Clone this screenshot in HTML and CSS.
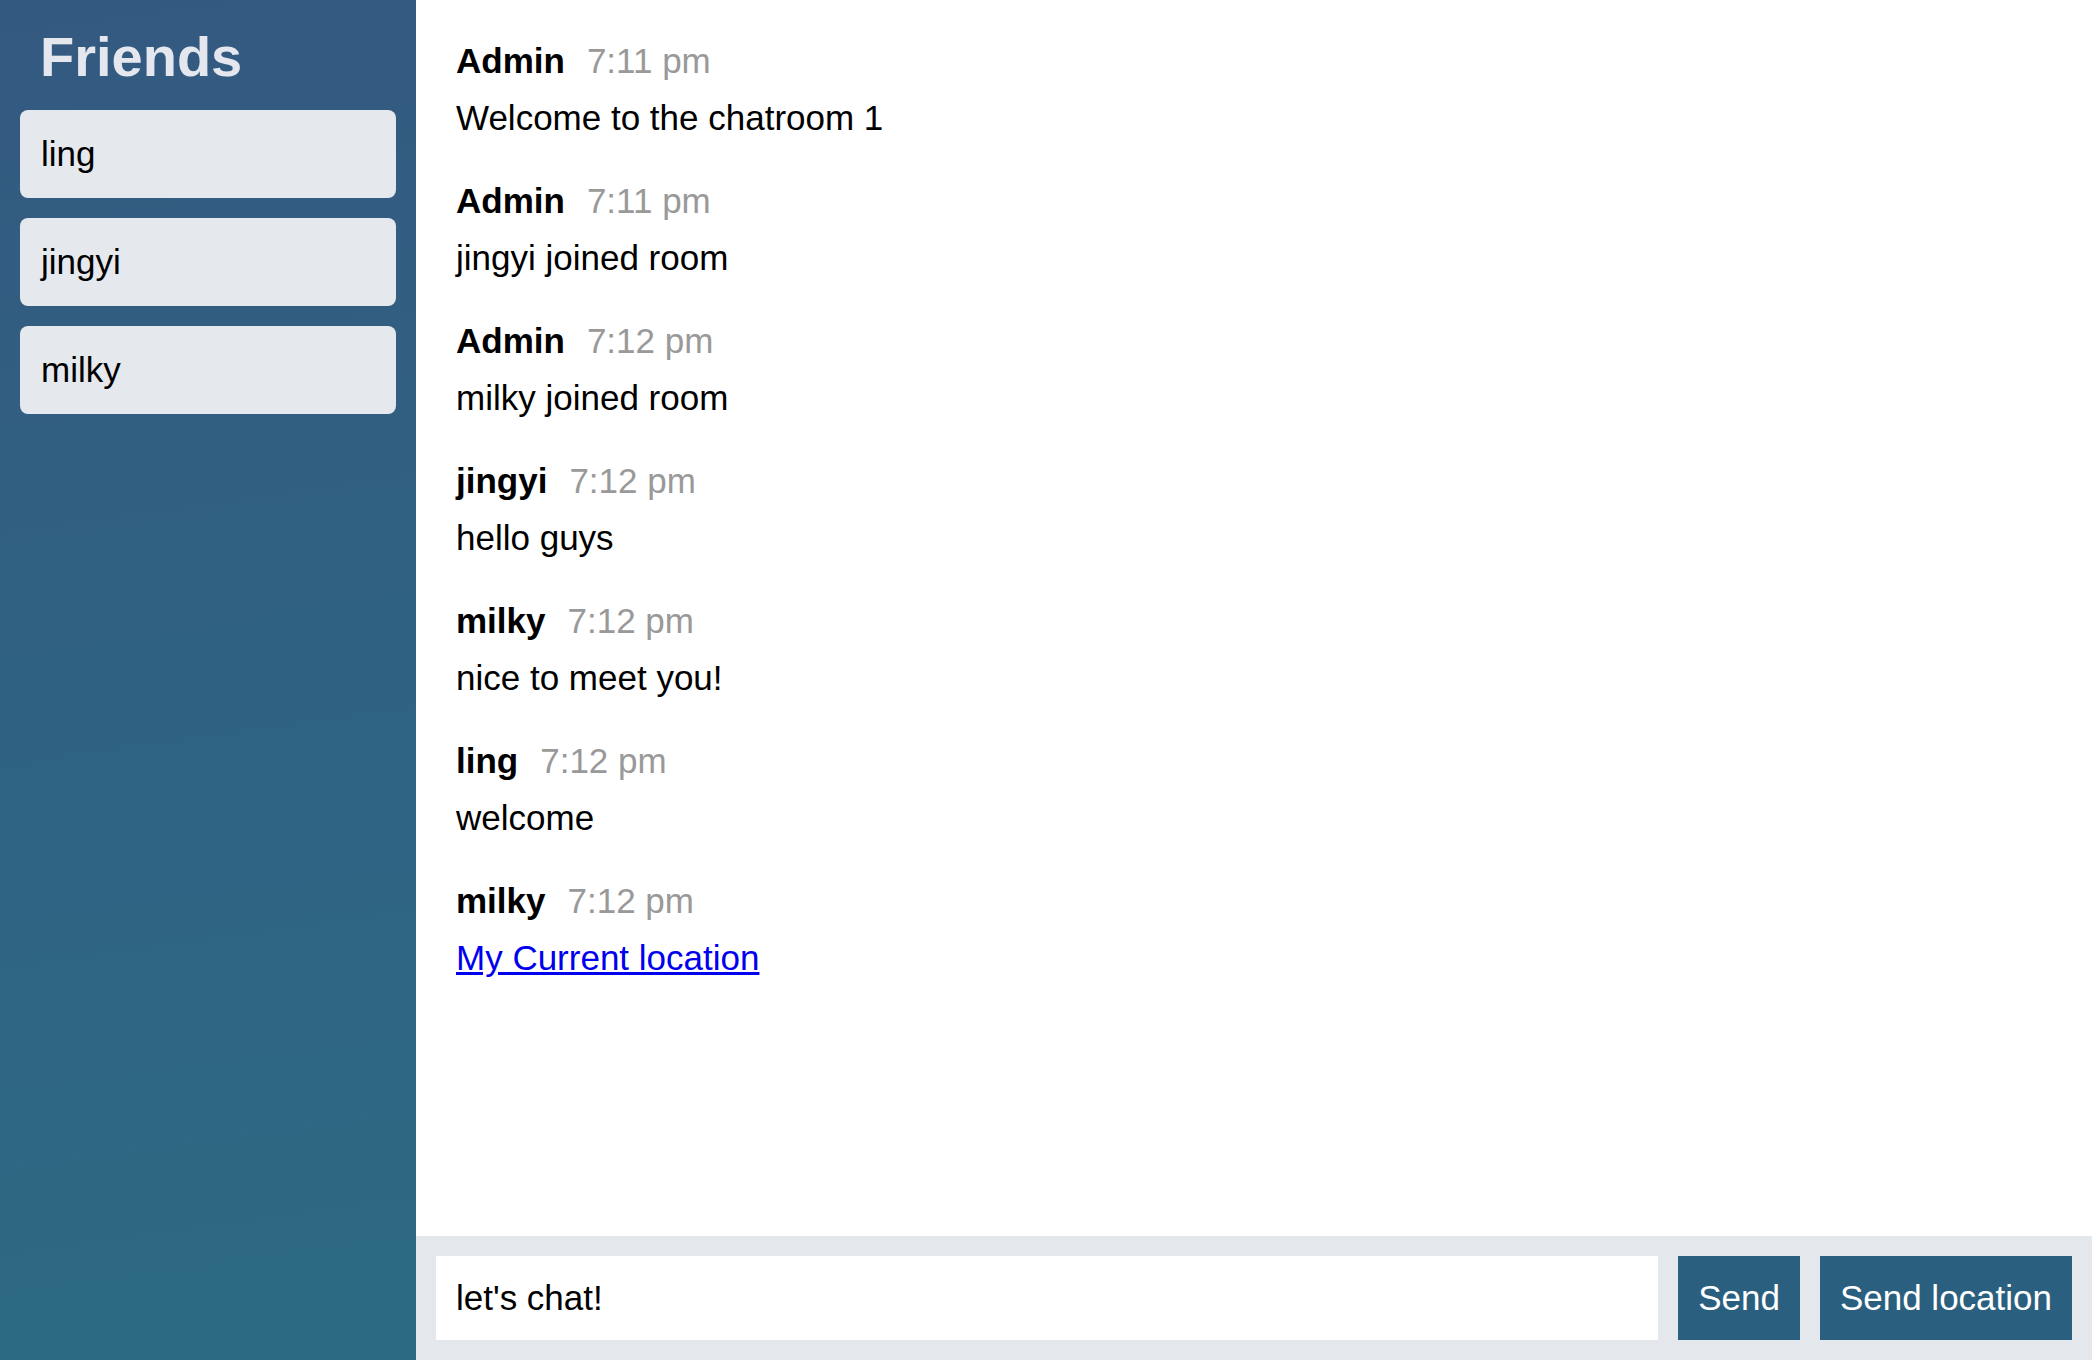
FILE: index.html
```html
<!DOCTYPE html>
<html lang="en">
<head>
<meta charset="utf-8">
<title>Chat</title>
<link rel="stylesheet" href="styles.css">
</head>
<body>
<div class="app">
  <aside class="sidebar">
    <h2 class="sidebar-title">Friends</h2>
    <ul class="friend-list">
      <li class="friend">ling</li>
      <li class="friend">jingyi</li>
      <li class="friend">milky</li>
    </ul>
  </aside>
  <main class="chat">
    <div class="messages">
      <div class="message">
        <p class="message-meta"><span class="message-name">Admin</span><span class="message-time">7:11 pm</span></p>
        <p class="message-body">Welcome to the chatroom 1</p>
      </div>
      <div class="message">
        <p class="message-meta"><span class="message-name">Admin</span><span class="message-time">7:11 pm</span></p>
        <p class="message-body">jingyi joined room</p>
      </div>
      <div class="message">
        <p class="message-meta"><span class="message-name">Admin</span><span class="message-time">7:12 pm</span></p>
        <p class="message-body">milky joined room</p>
      </div>
      <div class="message">
        <p class="message-meta"><span class="message-name">jingyi</span><span class="message-time">7:12 pm</span></p>
        <p class="message-body">hello guys</p>
      </div>
      <div class="message">
        <p class="message-meta"><span class="message-name">milky</span><span class="message-time">7:12 pm</span></p>
        <p class="message-body">nice to meet you!</p>
      </div>
      <div class="message">
        <p class="message-meta"><span class="message-name">ling</span><span class="message-time">7:12 pm</span></p>
        <p class="message-body">welcome</p>
      </div>
      <div class="message">
        <p class="message-meta"><span class="message-name">milky</span><span class="message-time">7:12 pm</span></p>
        <p class="message-body"><a class="message-link" href="#">My Current location</a></p>
      </div>
    </div>
    <div class="compose">
      <form class="compose-form">
        <input class="compose-input" type="text" value="let's chat!">
        <button class="btn" type="button">Send</button>
      </form>
      <button class="btn" type="button">Send location</button>
    </div>
  </main>
</div>
</body>
</html>
```
FILE: styles.css
```css
* {
  box-sizing: border-box;
}

html, body {
  margin: 0;
  padding: 0;
  height: 100%;
}

body {
  font-family: "Liberation Sans", Arial, Helvetica, sans-serif;
  font-size: 35px;
  line-height: 40px;
  color: #111;
}

.app {
  display: flex;
  height: 1360px;
}

.sidebar {
  width: 416px;
  flex-shrink: 0;
  padding: 25px 20px 0;
  background: linear-gradient(172deg, #345980 0%, #2f6383 55%, #2c6a82 100%);
}

.sidebar-title {
  margin: 0 0 21px 20px;
  font-size: 56px;
  line-height: 64px;
  font-weight: 700;
  color: #e4e8ee;
}

.friend-list {
  list-style: none;
  margin: 0;
  padding: 0;
  display: flex;
  flex-direction: column;
  gap: 20px;
}

.friend {
  height: 88px;
  display: flex;
  align-items: center;
  padding: 0 21px;
  background: #e5e8ed;
  border-radius: 8px;
  color: #000;
  font-size: 35px;
}

.chat {
  flex: 1;
  display: flex;
  flex-direction: column;
  min-width: 0;
  background: #fff;
}

.messages {
  flex: 1;
  overflow: hidden;
  padding: 41px 40px 0;
}

.message {
  margin-bottom: 43px;
}

.message-meta {
  margin: 0 0 17px;
  display: flex;
  align-items: baseline;
  gap: 22px;
}

.message-name {
  font-weight: 700;
  color: #000;
}

.message-time {
  color: #999;
}

.message-body {
  margin: 0;
  color: #000;
}

.message-link {
  color: #0000ee;
  text-decoration: underline;
}

.compose {
  height: 124px;
  flex-shrink: 0;
  display: flex;
  gap: 20px;
  padding: 20px;
  background: #e4e8ed;
}

.compose-form {
  flex: 1;
  display: flex;
  gap: 20px;
  margin: 0;
}

.compose-input {
  flex: 1;
  min-width: 0;
  height: 84px;
  border: none;
  outline: none;
  padding: 0 20px;
  background: #fff;
  font-family: inherit;
  font-size: 35px;
  color: #000;
}

.btn {
  height: 84px;
  border: none;
  padding: 0 20px;
  background: #2b5f80;
  color: #fff;
  font-family: inherit;
  font-size: 35px;
  cursor: pointer;
}
```
